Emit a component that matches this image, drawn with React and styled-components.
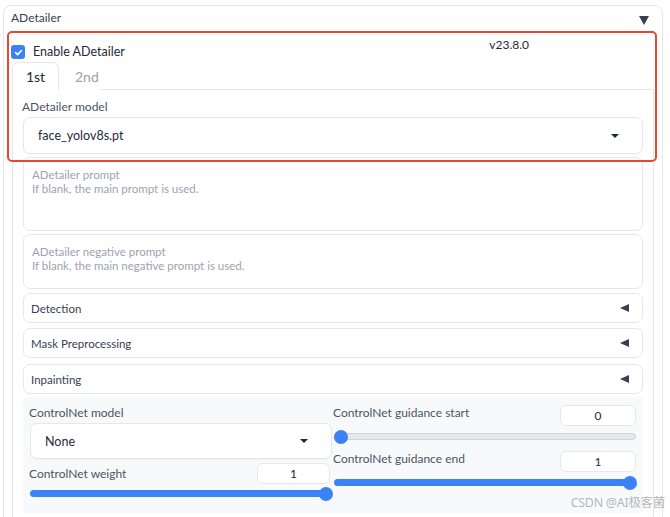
import React from "react";
import styled, { createGlobalStyle } from "styled-components";

const Global = createGlobalStyle`
  html, body {
    margin: 0;
    background: #ffffff;
    font-family: "Lato", "Noto Sans", sans-serif;
    color: #374151;
    overflow: hidden;
  }
`;

const Page = styled.div`
  position: relative;
  width: 670px;
  height: 517px;
  overflow: hidden;
  padding: 5px 7px 0 3px;
  box-sizing: border-box;
`;

const Panel = styled.section`
  border: 1px solid #e5e7eb;
  border-radius: 8px;
  padding: 4px 8px 0 7px;
  height: 560px;
  box-sizing: border-box;
`;

const Header = styled.div`
  display: flex;
  justify-content: space-between;
  align-items: flex-start;
  height: 22px;
`;

const HeaderTitle = styled.span`
  font-size: 12px;
  line-height: 16px;
  color: #374151;
`;

const DownArrow = styled.span`
  width: 0;
  height: 0;
  margin: 6px 5px 0 0;
  border-left: 5px solid transparent;
  border-right: 5px solid transparent;
  border-top: 9px solid #374151;
`;

const EnableRow = styled.div`
  display: flex;
  align-items: flex-start;
  height: 30px;
`;

const Check = styled.span`
  width: 14px;
  height: 14px;
  margin-top: 13px;
  border-radius: 3px;
  background: #3b82f6;
  display: flex;
  align-items: center;
  justify-content: center;
`;

const EnableLabel = styled.span`
  margin: 12px 0 0 8px;
  font-size: 12.5px;
  line-height: 16px;
  color: #1f2937;
`;

const Version = styled.span`
  margin: 5px 125px 0 auto;
  font-size: 12px;
  line-height: 16px;
  color: #1f2937;
`;

const TabBar = styled.div`
  display: flex;
  margin-left: 1px;
  border-bottom: 1px solid #e5e7eb;
  height: 27px;
`;

const Tab = styled.div`
  width: ${(p) => (p.$active ? "47px" : "auto")};
  padding: ${(p) => (p.$active ? "0" : "0 0 0 15px")};
  box-sizing: border-box;
  text-align: ${(p) => (p.$active ? "center" : "left")};
  font-size: 14px;
  line-height: 27px;
  color: ${(p) => (p.$active ? "#1f2937" : "#9ca3af")};
  background: #ffffff;
  border: ${(p) => (p.$active ? "1px solid #e5e7eb" : "1px solid transparent")};
  border-bottom: none;
  border-radius: 6px 6px 0 0;
  margin-bottom: -1px;
  height: 28px;
`;

const TabBody = styled.div`
  margin-left: 1px;
  border: 1px solid #e5e7eb;
  border-top: none;
  padding: 9px 10px 0 10px;
  display: flex;
  flex-direction: column;
  gap: 3px;
  height: 460px;
  box-sizing: border-box;
`;

const FieldLabel = styled.div`
  font-size: 12px;
  line-height: 16px;
  color: #4b5563;
  margin-left: -1px;
  white-space: nowrap;
`;

const Field = styled.div`
  display: flex;
  flex-direction: column;
  gap: 2px;
`;

const SelectBox = styled.div`
  height: ${(p) => p.$h || 37}px;
  box-sizing: border-box;
  background: #ffffff;
  border: 1px solid #e5e7eb;
  border-radius: 7px;
  box-shadow: 0 1px 1px rgba(0, 0, 0, 0.03);
  display: flex;
  align-items: center;
  justify-content: space-between;
  padding: 0 23px 0 14px;
  font-size: 12.5px;
  color: #1f2937;
`;

const Caret = styled.span`
  width: 0;
  height: 0;
  border-left: 4px solid transparent;
  border-right: 4px solid transparent;
  border-top: 4px solid #1f2937;
`;

const TextArea = styled.div`
  height: ${(p) => p.$h}px;
  box-sizing: border-box;
  border: 1px solid #e5e7eb;
  border-radius: 7px;
  padding: 10px 8px;
  color: #9ca3af;
`;

const Placeholder = styled.div`
  font-size: 11.5px;
  line-height: 14px;
  height: 14px;
  white-space: nowrap;
`;

const Accordion = styled.div`
  height: 30px;
  box-sizing: border-box;
  border: 1px solid #e5e7eb;
  border-radius: 7px;
  display: flex;
  align-items: center;
  justify-content: space-between;
  padding: 0 13px 0 7px;
  font-size: 11.5px;
  color: #374151;
  margin-top: ${(p) => p.$mt || 0}px;
`;

const LeftArrow = styled.span`
  width: 0;
  height: 0;
  border-top: 4.5px solid transparent;
  border-bottom: 4.5px solid transparent;
  border-right: 9px solid #374151;
`;

const GrayArea = styled.div`
  background: #f8f9fb;
  display: grid;
  grid-template-columns: 302px 302px;
  column-gap: 2px;
  padding: 8px 7px 0 7px;
  height: 116px;
  box-sizing: border-box;
`;

const Column = styled.div`
  display: flex;
  flex-direction: column;
`;

const SliderHead = styled.div`
  display: flex;
  justify-content: space-between;
  align-items: ${(p) => (p.$top ? "flex-start" : "center")};
  height: 21px;
  margin-top: ${(p) => p.$mt || 0}px;
`;

const NumberBox = styled.div`
  width: ${(p) => p.$w}px;
  height: 21px;
  box-sizing: border-box;
  background: #ffffff;
  border: 1px solid #e5e7eb;
  border-radius: 6px;
  display: flex;
  align-items: center;
  justify-content: center;
  font-size: 12px;
  color: #1f2937;
  margin-right: ${(p) => p.$mr || 0}px;
`;

const Track = styled.div`
  position: relative;
  height: 7px;
  border-radius: 4px;
  box-sizing: border-box;
  margin-top: ${(p) => p.$mt || 0}px;
  background: ${(p) => (p.$full ? "#3b82f6" : "#e5e7eb")};
  border: ${(p) => (p.$full ? "none" : "1px solid #cfd2d8")};
`;

const Thumb = styled.span`
  position: absolute;
  top: 50%;
  width: 14px;
  height: 14px;
  border-radius: 50%;
  background: #3b82f6;
  transform: translateY(-50%);
  ${(p) => (p.$end ? "right: -1px;" : "left: -1px;")}
`;

const RedBox = styled.div`
  position: absolute;
  left: 7px;
  top: 31px;
  width: 650px;
  height: 131px;
  box-sizing: border-box;
  border: 2px solid #e8472f;
  border-radius: 5px;
  pointer-events: none;
`;

const Watermark = styled.div`
  position: absolute;
  right: 5px;
  bottom: 6px;
  font-size: 12.5px;
  color: rgba(160, 160, 160, 0.75);
  font-family: "Noto Sans", "Noto Sans CJK SC", sans-serif;
  letter-spacing: -0.3px;
`;

export default function App() {
  return (
    <Page>
      <Global />
      <Panel>
        <Header>
          <HeaderTitle>ADetailer</HeaderTitle>
          <DownArrow />
        </Header>
        <EnableRow>
          <Check>
            <svg width="9" height="9" viewBox="0 0 10 10">
              <path d="M1.8 5.2 L4 7.3 L8.3 2.8" fill="none" stroke="#fff" strokeWidth="1.8" strokeLinecap="round" strokeLinejoin="round" />
            </svg>
          </Check>
          <EnableLabel>Enable ADetailer</EnableLabel>
          <Version>v23.8.0</Version>
        </EnableRow>
        <TabBar>
          <Tab $active>1st</Tab>
          <Tab>2nd</Tab>
        </TabBar>
        <TabBody>
          <Field>
            <FieldLabel>ADetailer model</FieldLabel>
            <SelectBox>
              face_yolov8s.pt
              <Caret />
            </SelectBox>
          </Field>
          <TextArea $h={74}>
            <Placeholder>ADetailer prompt</Placeholder>
            <Placeholder>If blank, the main prompt is used.</Placeholder>
          </TextArea>
          <TextArea $h={55}>
            <Placeholder>ADetailer negative prompt</Placeholder>
            <Placeholder>If blank, the main negative prompt is used.</Placeholder>
          </TextArea>
          <Accordion $mt={1}>
            Detection
            <LeftArrow />
          </Accordion>
          <Accordion $mt={2}>
            Mask Preprocessing
            <LeftArrow />
          </Accordion>
          <Accordion $mt={3}>
            Inpainting
            <LeftArrow />
          </Accordion>
          <GrayArea>
            <Column>
              <Field>
                <FieldLabel>ControlNet model</FieldLabel>
                <SelectBox $h={36}>
                  None
                  <Caret />
                </SelectBox>
              </Field>
              <SliderHead $mt={4}>
                <FieldLabel>ControlNet weight</FieldLabel>
                <NumberBox $w={73} $mr={2}>1</NumberBox>
              </SliderHead>
              <Track $full $mt={6}>
                <Thumb $end />
              </Track>
            </Column>
            <Column>
              <SliderHead $top>
                <FieldLabel>ControlNet guidance start</FieldLabel>
                <NumberBox $w={76}>0</NumberBox>
              </SliderHead>
              <Track $mt={7}>
                <Thumb />
              </Track>
              <SliderHead $mt={11} $top>
                <FieldLabel>ControlNet guidance end</FieldLabel>
                <NumberBox $w={76}>1</NumberBox>
              </SliderHead>
              <Track $full $mt={7}>
                <Thumb $end />
              </Track>
            </Column>
          </GrayArea>
        </TabBody>
      </Panel>
      <RedBox />
      <Watermark>CSDN @AI极客菌</Watermark>
    </Page>
  );
}
